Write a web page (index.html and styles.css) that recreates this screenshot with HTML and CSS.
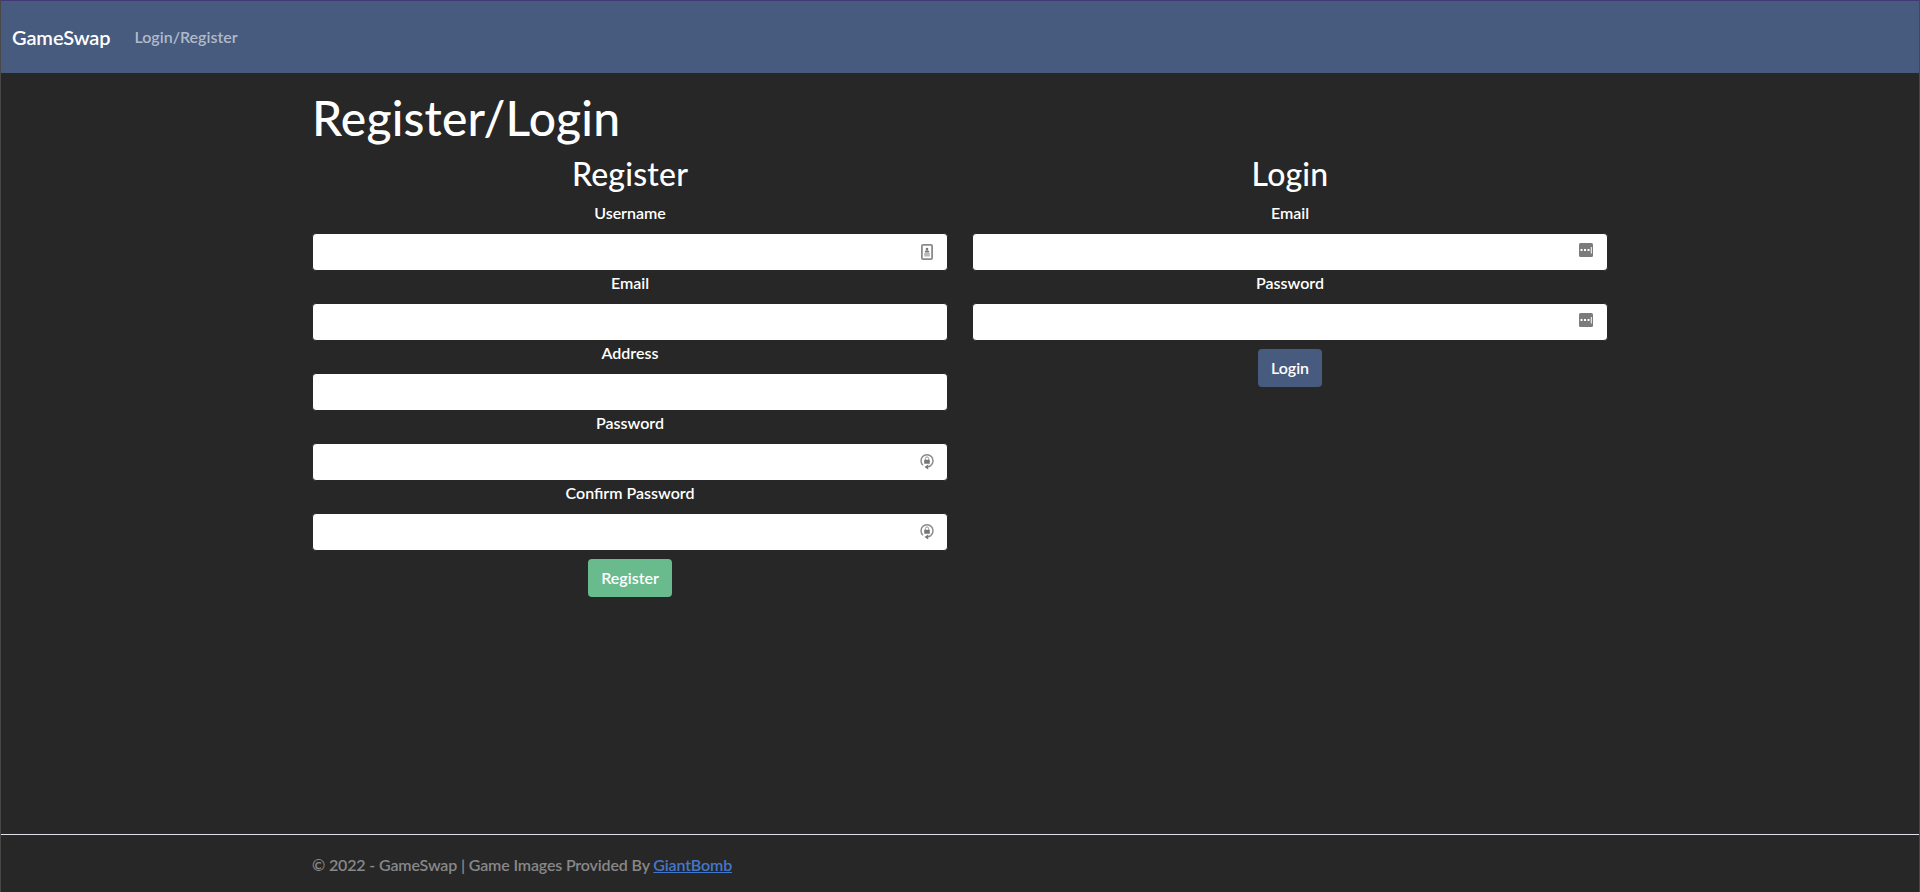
FILE: index.html
```html
<!DOCTYPE html>
<html lang="en">
<head>
<meta charset="utf-8">
<title>GameSwap</title>
<link rel="stylesheet" href="styles.css">
</head>
<body>
<svg class="defs" aria-hidden="true">
  <symbol id="contact" viewBox="0 0 12 16">
    <rect x=".9" y=".9" width="10.2" height="14.2" rx="1" fill="#fff" stroke="#8b8b8b" stroke-width="1.8"/>
    <circle cx="6" cy="5" r="1.3" fill="#777"/>
    <path d="M3.6 8.4q0-2.2 2.4-2.2t2.4 2.2zM3.2 9.6h5.6v1H3.200zM3.200 11.400h5.600v.8H3.200z" fill="#777"/>
  </symbol>
  <symbol id="lock" viewBox="0 0 14 17">
    <path d="M3 12.200A6 6 0 1 1 11 12.200Q10 13.500 8 13.800" fill="none" stroke="#8b8b8b" stroke-width="1.500"/>
    <path d="M4.200 6.800h5.600v4H4.200zM8.200 11.500V16.500L4.500 14z" fill="#777"/>
    <path d="M5.400 7V5.500a1.600 1.600 0 0 1 3.200 0V7" fill="none" stroke="#999" stroke-width="1"/>
  </symbol>
  <symbol id="dots" viewBox="0 0 14 14">
    <rect width="14" height="14" rx="1.5" fill="#7b7b7b"/>
    <path d="M1.500 6h2v2h-2zM5 6h2v2H5zM8.500 6h2v2h-2zM11.800 4h1v6.500h-1z" fill="#fff"/>
  </symbol>
</svg>
<header class="navbar">
  <a class="brand">GameSwap</a>
  <a class="nav-link">Login/Register</a>
</header>
<main class="container">
  <h1>Register/Login</h1>
  <div class="row">
    <form class="col">
      <h2>Register</h2>
      <label>Username</label>
      <div class="field"><svg class="icon-contact"><use href="#contact"/></svg></div>
      <label>Email</label>
      <div class="field"></div>
      <label>Address</label>
      <div class="field"></div>
      <label>Password</label>
      <div class="field"><svg class="icon-lock"><use href="#lock"/></svg></div>
      <label>Confirm Password</label>
      <div class="field"><svg class="icon-lock"><use href="#lock"/></svg></div>
      <button class="btn btn-success" type="button">Register</button>
    </form>
    <form class="col">
      <h2>Login</h2>
      <label>Email</label>
      <div class="field"><svg class="icon-dots"><use href="#dots"/></svg></div>
      <label>Password</label>
      <div class="field"><svg class="icon-dots"><use href="#dots"/></svg></div>
      <button class="btn btn-primary" type="button">Login</button>
    </form>
  </div>
</main>
<footer class="footer">
  <div class="container">© 2022 - GameSwap | Game Images Provided By <a>GiantBomb</a></div>
</footer>
</body>
</html>
```
FILE: styles.css
```css
* { box-sizing: border-box; }
body {
  margin: 0;
  height: 892px;
  display: flex;
  flex-direction: column;
  overflow: hidden;
  background: #272727;
  color: #fff;
  font: 500 16px/24px Lato, sans-serif;
  border-left: 1px solid #484848;
  border-right: 1px solid #484848;
}
.defs { position: absolute; width: 0; height: 0; }
.navbar {
  height: 73px;
  margin: 0 -1px;
  padding: 0 12px 1px;
  border-top: 1px solid #443577;
  display: flex;
  align-items: center;
  gap: 24px;
  background: #475b7e;
}
.brand { font-size: 20px; line-height: 30px; font-weight: 600; letter-spacing: -0.1px; }
.nav-link { color: #b0bac9; font-weight: 600; }
.container { width: 1320px; margin: 0 auto; padding: 0 12px; }
main { flex: 1; }
h1 { margin: 16px 0 8px; font-size: 48px; line-height: 57.6px; font-weight: 500; letter-spacing: 0.18px; }
h2 { margin: 0 0 8px; font-size: 32px; line-height: 38.4px; font-weight: 500; letter-spacing: 0.2px; }
.row { display: flex; gap: 24px; }
.col { flex: 1; display: flex; flex-direction: column; align-items: center; }
label { margin-bottom: 8px; font-weight: 600; }
.field {
  width: 100%;
  height: 38px;
  padding-right: 13px;
  display: flex;
  align-items: center;
  justify-content: flex-end;
  border: 1px solid #272727;
  border-radius: 4px;
  background: #fff;
}
.icon-contact { width: 12px; height: 16px; margin-right: 1px; }
.icon-lock { width: 14px; height: 17px; margin-bottom: 1px; }
.icon-dots { width: 14px; height: 14px; margin: 0 1px 4px 0; }
.btn {
  margin-top: 8px;
  height: 38px;
  padding: 0 13px;
  border: 0;
  border-radius: 4px;
  color: #fff;
  font: 600 16px/24px Lato, sans-serif;
}
.btn-success { background: #69ba8d; }
.btn-primary { background: #475b7e; }
.footer {
  height: 58px;
  margin: 0 -1px;
  border-top: 1px solid #dee2e6;
  line-height: 60px;
  font-weight: 600;
  letter-spacing: -0.15px;
  color: #888;
}
.footer a { color: #4377c9; text-decoration: underline; }
```
